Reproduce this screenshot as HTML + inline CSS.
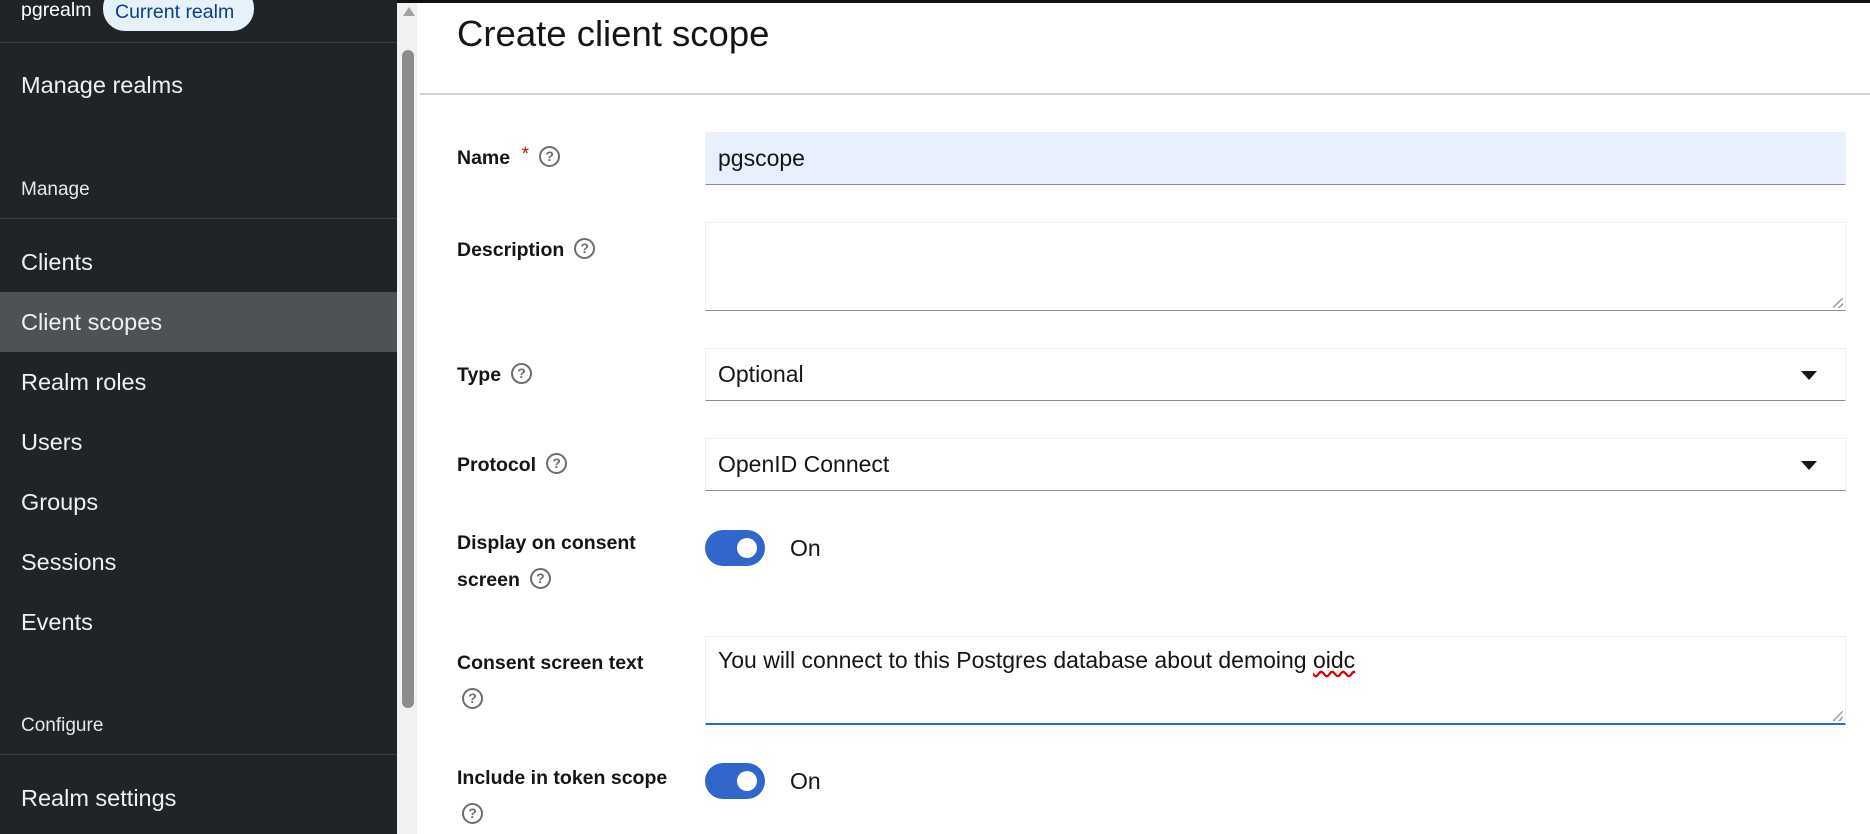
<!DOCTYPE html>
<html><head><meta charset="utf-8"><style>
*{margin:0;padding:0;box-sizing:border-box}
body{width:1870px;height:834px;overflow:hidden;background:#fff;font-family:"Liberation Sans",sans-serif;position:relative}
.a{position:absolute}
#side{left:0;top:0;width:397px;height:834px;background:#212427;color:#fff}
.nav{position:absolute;left:21px;font-size:23.5px;line-height:28px;color:#f0f0f0}
.sec{position:absolute;left:21px;font-size:19px;color:#e8e8e8}
.hr{position:absolute;left:0;width:397px;height:1px;background:#3c3f42}
.lbl{position:absolute;left:457px;font-weight:bold;font-size:19.5px;color:#151515;line-height:37px}
.q{display:inline-block;width:21px;height:21px;border:2.5px solid #6a6e73;border-radius:50%;font-size:14px;font-weight:bold;color:#6a6e73;text-align:center;line-height:16px;vertical-align:middle;margin-left:10px;position:relative;top:-2px}
.inp{position:absolute;left:705px;width:1141px;border:1px solid #f0f0f0;border-bottom:1.5px solid #8a8d90;font-size:23px;color:#151515;padding-left:12px}
.caret{position:absolute;right:28px;top:50%;margin-top:-4px;width:0;height:0;border-left:8px solid transparent;border-right:8px solid transparent;border-top:9px solid #151515}
.tog{position:absolute;left:705px;width:60px;height:36px;border-radius:18px;background:#3366cc}
.tog::after{content:"";position:absolute;right:8px;top:8px;width:20px;height:20px;border-radius:50%;background:#fff}
.on{position:absolute;left:790px;font-size:23px;color:#151515}
.grip{position:absolute;right:2px;bottom:2px;width:10px;height:10px;background:linear-gradient(135deg,transparent 45%,#999 45%,#999 55%,transparent 55%,transparent 75%,#999 75%,#999 85%,transparent 85%)}
</style></head><body>
<div class="a" style="left:0;top:0;width:1870px;height:3px;background:#111"></div>
<div id="side" class="a">
<div class="a" style="left:21px;top:-1px;font-size:19.5px;color:#fff">pgrealm</div>
<div class="a" style="left:103px;top:-14px;width:151px;height:45px;border-radius:22px;background:#e7f1fa;color:#0b3f8a;font-size:19.5px;padding:15px 0 0 12px">Current realm</div>
<div class="hr" style="top:42px"></div>
<div class="nav" style="top:71px">Manage realms</div>
<div class="sec" style="top:179px">Manage</div>
<div class="hr" style="top:218px"></div>
<div class="nav" style="top:248px">Clients</div>
<div class="a" style="left:0;top:292px;width:397px;height:60px;background:#4f5255"></div>
<div class="nav" style="top:308px">Client scopes</div>
<div class="nav" style="top:368px">Realm roles</div>
<div class="nav" style="top:428px">Users</div>
<div class="nav" style="top:488px">Groups</div>
<div class="nav" style="top:548px">Sessions</div>
<div class="nav" style="top:608px">Events</div>
<div class="sec" style="top:715px">Configure</div>
<div class="hr" style="top:754px"></div>
<div class="nav" style="top:784px">Realm settings</div>
</div>
<div class="a" style="left:397px;top:3px;width:20px;height:831px;background:#f1f1f1"></div>
<div class="a" style="left:403px;top:7px;width:0;height:0;border-left:6px solid transparent;border-right:6px solid transparent;border-bottom:9px solid #a3a3a3"></div>
<div class="a" style="left:402px;top:50px;width:12px;height:658px;border-radius:6px;background:#8c8c8c"></div>
<div class="a" style="left:457px;top:13px;font-size:36.5px;color:#151515">Create client scope</div>
<div class="a" style="left:420px;top:93px;width:1450px;height:2px;background:#d2d2d2"></div>

<div class="lbl" style="top:140px">Name <span style="color:#c9190b;font-weight:normal;margin-left:6px;position:relative;top:-4px">*</span><span class="q">?</span></div>
<div class="inp" style="top:132px;height:53px;background:#e8f0fe;line-height:50px">pgscope</div>

<div class="lbl" style="top:232px">Description<span class="q">?</span></div>
<div class="inp" style="top:222px;height:89px"><div class="grip"></div></div>

<div class="lbl" style="top:357px">Type<span class="q">?</span></div>
<div class="inp" style="top:348px;height:53px;line-height:50px">Optional<div class="caret"></div></div>

<div class="lbl" style="top:447px">Protocol<span class="q">?</span></div>
<div class="inp" style="top:438px;height:53px;line-height:50px">OpenID Connect<div class="caret"></div></div>

<div class="lbl" style="top:525px">Display on consent<br>screen<span class="q">?</span></div>
<div class="tog" style="top:530px"></div>
<div class="on" style="top:535px">On</div>

<div class="lbl" style="top:645px">Consent screen text<br><span class="q" style="margin-left:5px">?</span></div>
<div class="inp" style="top:636px;height:89px;border-bottom:2px solid #3366cc;padding-top:10px">You will connect to this Postgres database about demoing <span style="text-decoration:underline wavy #d00">oidc</span><div class="grip"></div></div>

<div class="lbl" style="top:760px">Include in token scope<br><span class="q" style="margin-left:5px">?</span></div>
<div class="tog" style="top:763px"></div>
<div class="on" style="top:768px">On</div>
</body></html>
